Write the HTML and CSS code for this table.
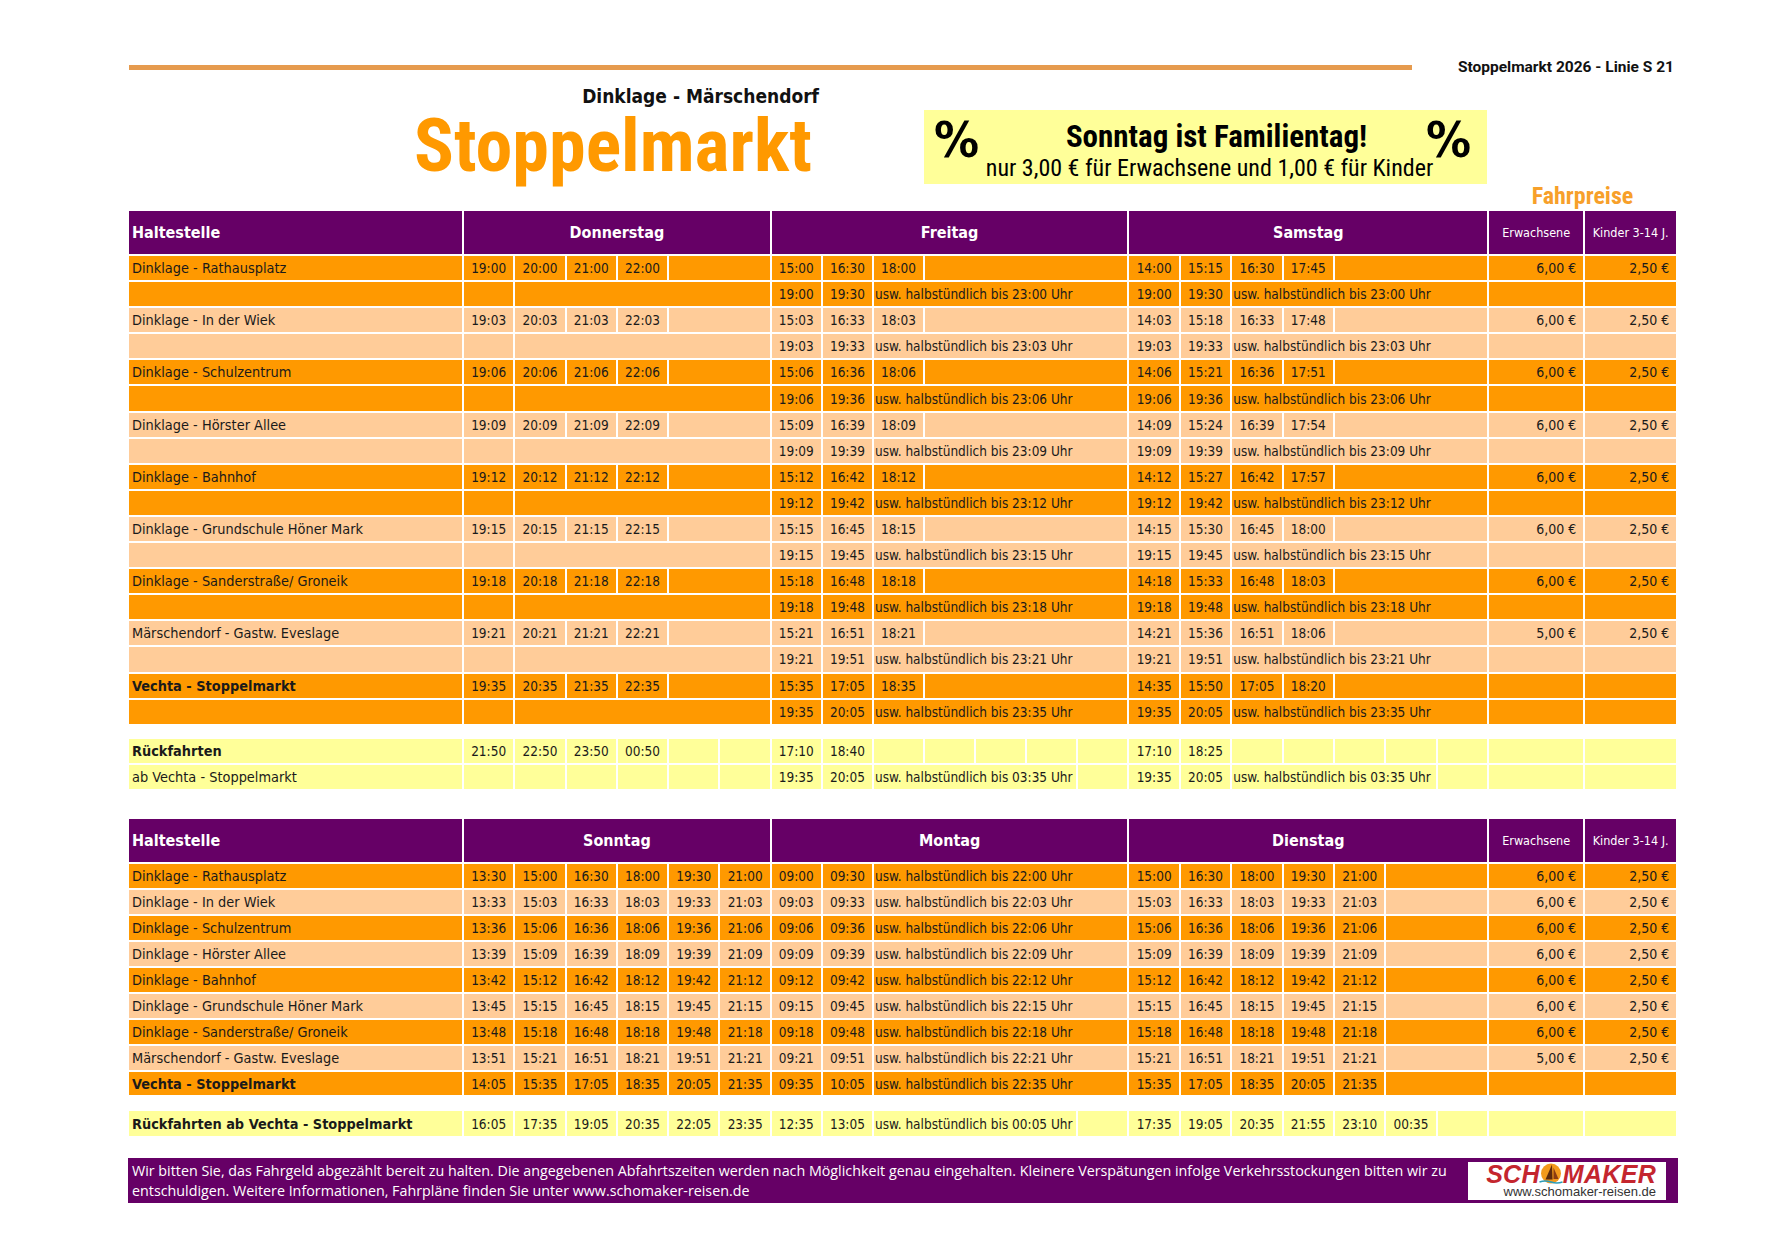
FILE: index.html
```html
<!DOCTYPE html>
<html lang="de">
<head>
<meta charset="utf-8">
<title>Stoppelmarkt 2026 - Linie S 21</title>
<link rel="stylesheet" href="styles.css">
</head>
<body>
<div class="sheet">
  <div class="topbar">
    <div class="rule"></div>
    <div class="doc-label">Stoppelmarkt 2026 - Linie S 21</div>
  </div>

  <div class="head">
    <div class="titles">
      <div class="subtitle">Dinklage - Märschendorf</div>
      <div class="title">Stoppelmarkt</div>
    </div>
    <div class="promo">
      <div class="pct">%</div>
      <div class="promo-text">
        <div class="promo-main">Sonntag ist Familientag!</div>
        <div class="promo-sub">nur 3,00 € für Erwachsene und 1,00 € für Kinder</div>
      </div>
      <div class="pct pct-right">%</div>
    </div>
  </div>

  <div class="fp-row"><div class="fp">Fahrpreise</div></div>

  <!-- Table 1 -->
  <div class="tt tt1">
    <div class="r h">
      <div class="c hl">Haltestelle</div>
      <div class="c hd s6">Donnerstag</div>
      <div class="c hd s7">Freitag</div>
      <div class="c hd s7">Samstag</div>
      <div class="c hs">Erwachsene</div>
      <div class="c hs">Kinder 3-14 J.</div>
    </div>

    <div class="r o">
      <div class="c st">Dinklage - Rathausplatz</div>
      <div class="c t">19:00</div><div class="c t">20:00</div><div class="c t">21:00</div><div class="c t">22:00</div><div class="c s2"></div>
      <div class="c t">15:00</div><div class="c t">16:30</div><div class="c t">18:00</div><div class="c s4"></div>
      <div class="c t">14:00</div><div class="c t">15:15</div><div class="c t">16:30</div><div class="c t">17:45</div><div class="c s3"></div>
      <div class="c p">6,00 €</div><div class="c p">2,50 €</div>
    </div>
    <div class="r o">
      <div class="c"></div>
      <div class="c"></div><div class="c s5"></div>
      <div class="c t">19:00</div><div class="c t">19:30</div><div class="c u s5">usw. halbstündlich bis 23:00 Uhr</div>
      <div class="c t">19:00</div><div class="c t">19:30</div><div class="c u s5">usw. halbstündlich bis 23:00 Uhr</div>
      <div class="c"></div><div class="c"></div>
    </div>

    <div class="r l">
      <div class="c st">Dinklage - In der Wiek</div>
      <div class="c t">19:03</div><div class="c t">20:03</div><div class="c t">21:03</div><div class="c t">22:03</div><div class="c s2"></div>
      <div class="c t">15:03</div><div class="c t">16:33</div><div class="c t">18:03</div><div class="c s4"></div>
      <div class="c t">14:03</div><div class="c t">15:18</div><div class="c t">16:33</div><div class="c t">17:48</div><div class="c s3"></div>
      <div class="c p">6,00 €</div><div class="c p">2,50 €</div>
    </div>
    <div class="r l">
      <div class="c"></div>
      <div class="c"></div><div class="c s5"></div>
      <div class="c t">19:03</div><div class="c t">19:33</div><div class="c u s5">usw. halbstündlich bis 23:03 Uhr</div>
      <div class="c t">19:03</div><div class="c t">19:33</div><div class="c u s5">usw. halbstündlich bis 23:03 Uhr</div>
      <div class="c"></div><div class="c"></div>
    </div>

    <div class="r o">
      <div class="c st">Dinklage - Schulzentrum</div>
      <div class="c t">19:06</div><div class="c t">20:06</div><div class="c t">21:06</div><div class="c t">22:06</div><div class="c s2"></div>
      <div class="c t">15:06</div><div class="c t">16:36</div><div class="c t">18:06</div><div class="c s4"></div>
      <div class="c t">14:06</div><div class="c t">15:21</div><div class="c t">16:36</div><div class="c t">17:51</div><div class="c s3"></div>
      <div class="c p">6,00 €</div><div class="c p">2,50 €</div>
    </div>
    <div class="r o">
      <div class="c"></div>
      <div class="c"></div><div class="c s5"></div>
      <div class="c t">19:06</div><div class="c t">19:36</div><div class="c u s5">usw. halbstündlich bis 23:06 Uhr</div>
      <div class="c t">19:06</div><div class="c t">19:36</div><div class="c u s5">usw. halbstündlich bis 23:06 Uhr</div>
      <div class="c"></div><div class="c"></div>
    </div>

    <div class="r l">
      <div class="c st">Dinklage - Hörster Allee</div>
      <div class="c t">19:09</div><div class="c t">20:09</div><div class="c t">21:09</div><div class="c t">22:09</div><div class="c s2"></div>
      <div class="c t">15:09</div><div class="c t">16:39</div><div class="c t">18:09</div><div class="c s4"></div>
      <div class="c t">14:09</div><div class="c t">15:24</div><div class="c t">16:39</div><div class="c t">17:54</div><div class="c s3"></div>
      <div class="c p">6,00 €</div><div class="c p">2,50 €</div>
    </div>
    <div class="r l">
      <div class="c"></div>
      <div class="c"></div><div class="c s5"></div>
      <div class="c t">19:09</div><div class="c t">19:39</div><div class="c u s5">usw. halbstündlich bis 23:09 Uhr</div>
      <div class="c t">19:09</div><div class="c t">19:39</div><div class="c u s5">usw. halbstündlich bis 23:09 Uhr</div>
      <div class="c"></div><div class="c"></div>
    </div>

    <div class="r o">
      <div class="c st">Dinklage - Bahnhof</div>
      <div class="c t">19:12</div><div class="c t">20:12</div><div class="c t">21:12</div><div class="c t">22:12</div><div class="c s2"></div>
      <div class="c t">15:12</div><div class="c t">16:42</div><div class="c t">18:12</div><div class="c s4"></div>
      <div class="c t">14:12</div><div class="c t">15:27</div><div class="c t">16:42</div><div class="c t">17:57</div><div class="c s3"></div>
      <div class="c p">6,00 €</div><div class="c p">2,50 €</div>
    </div>
    <div class="r o">
      <div class="c"></div>
      <div class="c"></div><div class="c s5"></div>
      <div class="c t">19:12</div><div class="c t">19:42</div><div class="c u s5">usw. halbstündlich bis 23:12 Uhr</div>
      <div class="c t">19:12</div><div class="c t">19:42</div><div class="c u s5">usw. halbstündlich bis 23:12 Uhr</div>
      <div class="c"></div><div class="c"></div>
    </div>

    <div class="r l">
      <div class="c st">Dinklage - Grundschule Höner Mark</div>
      <div class="c t">19:15</div><div class="c t">20:15</div><div class="c t">21:15</div><div class="c t">22:15</div><div class="c s2"></div>
      <div class="c t">15:15</div><div class="c t">16:45</div><div class="c t">18:15</div><div class="c s4"></div>
      <div class="c t">14:15</div><div class="c t">15:30</div><div class="c t">16:45</div><div class="c t">18:00</div><div class="c s3"></div>
      <div class="c p">6,00 €</div><div class="c p">2,50 €</div>
    </div>
    <div class="r l">
      <div class="c"></div>
      <div class="c"></div><div class="c s5"></div>
      <div class="c t">19:15</div><div class="c t">19:45</div><div class="c u s5">usw. halbstündlich bis 23:15 Uhr</div>
      <div class="c t">19:15</div><div class="c t">19:45</div><div class="c u s5">usw. halbstündlich bis 23:15 Uhr</div>
      <div class="c"></div><div class="c"></div>
    </div>

    <div class="r o">
      <div class="c st">Dinklage - Sanderstraße/ Groneik</div>
      <div class="c t">19:18</div><div class="c t">20:18</div><div class="c t">21:18</div><div class="c t">22:18</div><div class="c s2"></div>
      <div class="c t">15:18</div><div class="c t">16:48</div><div class="c t">18:18</div><div class="c s4"></div>
      <div class="c t">14:18</div><div class="c t">15:33</div><div class="c t">16:48</div><div class="c t">18:03</div><div class="c s3"></div>
      <div class="c p">6,00 €</div><div class="c p">2,50 €</div>
    </div>
    <div class="r o">
      <div class="c"></div>
      <div class="c"></div><div class="c s5"></div>
      <div class="c t">19:18</div><div class="c t">19:48</div><div class="c u s5">usw. halbstündlich bis 23:18 Uhr</div>
      <div class="c t">19:18</div><div class="c t">19:48</div><div class="c u s5">usw. halbstündlich bis 23:18 Uhr</div>
      <div class="c"></div><div class="c"></div>
    </div>

    <div class="r l">
      <div class="c st">Märschendorf - Gastw. Eveslage</div>
      <div class="c t">19:21</div><div class="c t">20:21</div><div class="c t">21:21</div><div class="c t">22:21</div><div class="c s2"></div>
      <div class="c t">15:21</div><div class="c t">16:51</div><div class="c t">18:21</div><div class="c s4"></div>
      <div class="c t">14:21</div><div class="c t">15:36</div><div class="c t">16:51</div><div class="c t">18:06</div><div class="c s3"></div>
      <div class="c p">5,00 €</div><div class="c p">2,50 €</div>
    </div>
    <div class="r l">
      <div class="c"></div>
      <div class="c"></div><div class="c s5"></div>
      <div class="c t">19:21</div><div class="c t">19:51</div><div class="c u s5">usw. halbstündlich bis 23:21 Uhr</div>
      <div class="c t">19:21</div><div class="c t">19:51</div><div class="c u s5">usw. halbstündlich bis 23:21 Uhr</div>
      <div class="c"></div><div class="c"></div>
    </div>

    <div class="r o">
      <div class="c st b">Vechta - Stoppelmarkt</div>
      <div class="c t">19:35</div><div class="c t">20:35</div><div class="c t">21:35</div><div class="c t">22:35</div><div class="c s2"></div>
      <div class="c t">15:35</div><div class="c t">17:05</div><div class="c t">18:35</div><div class="c s4"></div>
      <div class="c t">14:35</div><div class="c t">15:50</div><div class="c t">17:05</div><div class="c t">18:20</div><div class="c s3"></div>
      <div class="c"></div><div class="c"></div>
    </div>
    <div class="r o">
      <div class="c"></div>
      <div class="c"></div><div class="c s5"></div>
      <div class="c t">19:35</div><div class="c t">20:05</div><div class="c u s5">usw. halbstündlich bis 23:35 Uhr</div>
      <div class="c t">19:35</div><div class="c t">20:05</div><div class="c u s5">usw. halbstündlich bis 23:35 Uhr</div>
      <div class="c"></div><div class="c"></div>
    </div>
  </div>

  <!-- Rückfahrten 1 -->
  <div class="tt ret1">
    <div class="r y">
      <div class="c st b">Rückfahrten</div>
      <div class="c t">21:50</div><div class="c t">22:50</div><div class="c t">23:50</div><div class="c t">00:50</div><div class="c"></div><div class="c"></div>
      <div class="c t">17:10</div><div class="c t">18:40</div><div class="c"></div><div class="c"></div><div class="c"></div><div class="c"></div><div class="c"></div>
      <div class="c t">17:10</div><div class="c t">18:25</div><div class="c"></div><div class="c"></div><div class="c"></div><div class="c"></div><div class="c"></div>
      <div class="c"></div><div class="c"></div>
    </div>
    <div class="r y">
      <div class="c st">ab Vechta - Stoppelmarkt</div>
      <div class="c"></div><div class="c"></div><div class="c"></div><div class="c"></div><div class="c"></div><div class="c"></div>
      <div class="c t">19:35</div><div class="c t">20:05</div><div class="c u s4">usw. halbstündlich bis 03:35 Uhr</div><div class="c"></div>
      <div class="c t">19:35</div><div class="c t">20:05</div><div class="c u s4">usw. halbstündlich bis 03:35 Uhr</div><div class="c"></div>
      <div class="c"></div><div class="c"></div>
    </div>
  </div>

  <!-- Table 2 -->
  <div class="tt tt2">
    <div class="r h">
      <div class="c hl">Haltestelle</div>
      <div class="c hd s6">Sonntag</div>
      <div class="c hd s7">Montag</div>
      <div class="c hd s7">Dienstag</div>
      <div class="c hs">Erwachsene</div>
      <div class="c hs">Kinder 3-14 J.</div>
    </div>

    <div class="r o">
      <div class="c st">Dinklage - Rathausplatz</div>
      <div class="c t">13:30</div><div class="c t">15:00</div><div class="c t">16:30</div><div class="c t">18:00</div><div class="c t">19:30</div><div class="c t">21:00</div>
      <div class="c t">09:00</div><div class="c t">09:30</div><div class="c u s5">usw. halbstündlich bis 22:00 Uhr</div>
      <div class="c t">15:00</div><div class="c t">16:30</div><div class="c t">18:00</div><div class="c t">19:30</div><div class="c t">21:00</div><div class="c s2"></div>
      <div class="c p">6,00 €</div><div class="c p">2,50 €</div>
    </div>
    <div class="r l">
      <div class="c st">Dinklage - In der Wiek</div>
      <div class="c t">13:33</div><div class="c t">15:03</div><div class="c t">16:33</div><div class="c t">18:03</div><div class="c t">19:33</div><div class="c t">21:03</div>
      <div class="c t">09:03</div><div class="c t">09:33</div><div class="c u s5">usw. halbstündlich bis 22:03 Uhr</div>
      <div class="c t">15:03</div><div class="c t">16:33</div><div class="c t">18:03</div><div class="c t">19:33</div><div class="c t">21:03</div><div class="c s2"></div>
      <div class="c p">6,00 €</div><div class="c p">2,50 €</div>
    </div>
    <div class="r o">
      <div class="c st">Dinklage - Schulzentrum</div>
      <div class="c t">13:36</div><div class="c t">15:06</div><div class="c t">16:36</div><div class="c t">18:06</div><div class="c t">19:36</div><div class="c t">21:06</div>
      <div class="c t">09:06</div><div class="c t">09:36</div><div class="c u s5">usw. halbstündlich bis 22:06 Uhr</div>
      <div class="c t">15:06</div><div class="c t">16:36</div><div class="c t">18:06</div><div class="c t">19:36</div><div class="c t">21:06</div><div class="c s2"></div>
      <div class="c p">6,00 €</div><div class="c p">2,50 €</div>
    </div>
    <div class="r l">
      <div class="c st">Dinklage - Hörster Allee</div>
      <div class="c t">13:39</div><div class="c t">15:09</div><div class="c t">16:39</div><div class="c t">18:09</div><div class="c t">19:39</div><div class="c t">21:09</div>
      <div class="c t">09:09</div><div class="c t">09:39</div><div class="c u s5">usw. halbstündlich bis 22:09 Uhr</div>
      <div class="c t">15:09</div><div class="c t">16:39</div><div class="c t">18:09</div><div class="c t">19:39</div><div class="c t">21:09</div><div class="c s2"></div>
      <div class="c p">6,00 €</div><div class="c p">2,50 €</div>
    </div>
    <div class="r o">
      <div class="c st">Dinklage - Bahnhof</div>
      <div class="c t">13:42</div><div class="c t">15:12</div><div class="c t">16:42</div><div class="c t">18:12</div><div class="c t">19:42</div><div class="c t">21:12</div>
      <div class="c t">09:12</div><div class="c t">09:42</div><div class="c u s5">usw. halbstündlich bis 22:12 Uhr</div>
      <div class="c t">15:12</div><div class="c t">16:42</div><div class="c t">18:12</div><div class="c t">19:42</div><div class="c t">21:12</div><div class="c s2"></div>
      <div class="c p">6,00 €</div><div class="c p">2,50 €</div>
    </div>
    <div class="r l">
      <div class="c st">Dinklage - Grundschule Höner Mark</div>
      <div class="c t">13:45</div><div class="c t">15:15</div><div class="c t">16:45</div><div class="c t">18:15</div><div class="c t">19:45</div><div class="c t">21:15</div>
      <div class="c t">09:15</div><div class="c t">09:45</div><div class="c u s5">usw. halbstündlich bis 22:15 Uhr</div>
      <div class="c t">15:15</div><div class="c t">16:45</div><div class="c t">18:15</div><div class="c t">19:45</div><div class="c t">21:15</div><div class="c s2"></div>
      <div class="c p">6,00 €</div><div class="c p">2,50 €</div>
    </div>
    <div class="r o">
      <div class="c st">Dinklage - Sanderstraße/ Groneik</div>
      <div class="c t">13:48</div><div class="c t">15:18</div><div class="c t">16:48</div><div class="c t">18:18</div><div class="c t">19:48</div><div class="c t">21:18</div>
      <div class="c t">09:18</div><div class="c t">09:48</div><div class="c u s5">usw. halbstündlich bis 22:18 Uhr</div>
      <div class="c t">15:18</div><div class="c t">16:48</div><div class="c t">18:18</div><div class="c t">19:48</div><div class="c t">21:18</div><div class="c s2"></div>
      <div class="c p">6,00 €</div><div class="c p">2,50 €</div>
    </div>
    <div class="r l">
      <div class="c st">Märschendorf - Gastw. Eveslage</div>
      <div class="c t">13:51</div><div class="c t">15:21</div><div class="c t">16:51</div><div class="c t">18:21</div><div class="c t">19:51</div><div class="c t">21:21</div>
      <div class="c t">09:21</div><div class="c t">09:51</div><div class="c u s5">usw. halbstündlich bis 22:21 Uhr</div>
      <div class="c t">15:21</div><div class="c t">16:51</div><div class="c t">18:21</div><div class="c t">19:51</div><div class="c t">21:21</div><div class="c s2"></div>
      <div class="c p">5,00 €</div><div class="c p">2,50 €</div>
    </div>
    <div class="r o">
      <div class="c st b">Vechta - Stoppelmarkt</div>
      <div class="c t">14:05</div><div class="c t">15:35</div><div class="c t">17:05</div><div class="c t">18:35</div><div class="c t">20:05</div><div class="c t">21:35</div>
      <div class="c t">09:35</div><div class="c t">10:05</div><div class="c u s5">usw. halbstündlich bis 22:35 Uhr</div>
      <div class="c t">15:35</div><div class="c t">17:05</div><div class="c t">18:35</div><div class="c t">20:05</div><div class="c t">21:35</div><div class="c s2"></div>
      <div class="c"></div><div class="c"></div>
    </div>
  </div>

  <!-- Rückfahrten 2 -->
  <div class="tt ret2">
    <div class="r y">
      <div class="c st b">Rückfahrten ab Vechta - Stoppelmarkt</div>
      <div class="c t">16:05</div><div class="c t">17:35</div><div class="c t">19:05</div><div class="c t">20:35</div><div class="c t">22:05</div><div class="c t">23:35</div>
      <div class="c t">12:35</div><div class="c t">13:05</div><div class="c u s4">usw. halbstündlich bis 00:05 Uhr</div><div class="c"></div>
      <div class="c t">17:35</div><div class="c t">19:05</div><div class="c t">20:35</div><div class="c t">21:55</div><div class="c t">23:10</div><div class="c t">00:35</div><div class="c"></div>
      <div class="c"></div><div class="c"></div>
    </div>
  </div>

  <div class="footer">
    <div class="footer-text">Wir bitten Sie, das Fahrgeld abgezählt bereit zu halten. Die angegebenen Abfahrtszeiten werden nach Möglichkeit genau eingehalten. Kleinere Verspätungen infolge Verkehrsstockungen bitten wir zu<br>entschuldigen. Weitere Informationen, Fahrpläne finden Sie unter www.schomaker-reisen.de</div>
    <div class="logo">
      <div class="logo-word"><span>SCH</span><svg class="logo-o" width="24" height="22" viewBox="0 0 24 22" aria-hidden="true"><circle cx="12" cy="10.5" r="10" fill="#f29a1d"/><path d="M6.5 16.5 L13 1.5 L13.5 16.5 Z" fill="#5b2a0e"/><path d="M14.5 4.5 L19.5 16 L14.5 16 Z" fill="#8a3c12"/><path d="M0.5 19 Q6 17 12 19 T23.5 19" stroke="#2b9cb8" stroke-width="1.6" fill="none"/></svg><span>MAKER</span></div>
      <div class="logo-url">www.schomaker-reisen.de</div>
    </div>
  </div>
</div>
</body>
</html>
```

FILE: styles.css
```css
html, body {
  margin: 0;
  padding: 0;
  background: #ffffff;
}

body {
  font-family: "DejaVu Sans Condensed", "DejaVu Sans", sans-serif;
  color: #1a1a1a;
}

.sheet {
  width: 1547px;
  margin-left: 129px;
  padding-top: 58px;
}

/* top bar */
.topbar {
  display: flex;
  align-items: center;
  height: 18px;
}

.rule {
  width: 1283px;
  height: 5px;
  background: #e69b4e;
}

.doc-label {
  margin-left: auto;
  margin-right: 2px;
  font-family: "Roboto", "DejaVu Sans Condensed", sans-serif;
  font-stretch: 90%;
  font-weight: bold;
  font-size: 15.5px;
  color: #111;
  white-space: nowrap;
}

/* heading */
.head {
  display: flex;
  height: 108px;
}

.titles {
  width: 691px;
  text-align: right;
}

.subtitle {
  margin-top: 8px;
  font-size: 19px;
  line-height: 24px;
  font-weight: bold;
  color: #111;
  padding-right: 1px;
}

.title {
  font-family: "Roboto", "DejaVu Sans Condensed", sans-serif;
  font-stretch: 75%;
  font-size: 74px;
  line-height: 76px;
  font-weight: bold;
  color: #ff9900;
  padding-right: 8px;
}

.promo {
  margin-left: 104px;
  margin-top: 34px;
  width: 563px;
  height: 74px;
  background: #ffff99;
  display: flex;
  color: #000;
}

.pct {
  flex: none;
  font-size: 50px;
  line-height: 56px;
  font-weight: bold;
  margin-top: 2px;
  padding-left: 10px;
}

.pct-right {
  padding-left: 0;
  padding-right: 16px;
}

.promo-text {
  flex: 1;
  min-width: 0;
  display: flex;
  flex-direction: column;
  align-items: center;
  padding-top: 9px;
  white-space: nowrap;
  font-family: "Roboto", "DejaVu Sans Condensed", sans-serif;
}

.promo-main {
  font-size: 31px;
  line-height: 36px;
  font-weight: bold;
  font-stretch: 75%;
  margin-left: 28px;
}

.promo-sub {
  font-size: 24px;
  line-height: 27px;
  font-stretch: 80%;
  margin-left: 14px;
}

.fp-row {
  display: flex;
  justify-content: flex-end;
  height: 27px;
}

.fp {
  width: 187px;
  text-align: center;
  font-family: "Roboto", "DejaVu Sans Condensed", sans-serif;
  font-stretch: 80%;
  font-size: 24px;
  line-height: 24px;
  font-weight: bold;
  color: #f7a02a;
}

/* timetable grids */
.tt {
  display: grid;
  grid-template-columns: 333px repeat(6, 49.3px) repeat(7, 49.1px) repeat(7, 49.4px) 94px 91px;
  column-gap: 2px;
  row-gap: 2px;
}

.tt1 {
  grid-template-rows: 43px;
  grid-auto-rows: 24.1px;
}

.ret1 {
  margin-top: 15px;
  grid-auto-rows: 24.4px;
}

.tt2 {
  margin-top: 30px;
  grid-template-rows: 43px;
  grid-auto-rows: 23.9px;
}

.ret2 {
  margin-top: 16px;
  grid-auto-rows: 25px;
}

.r {
  display: contents;
}

.c {
  display: flex;
  align-items: center;
  font-size: 13.5px;
  white-space: nowrap;
  min-width: 0;
}

.h > .c { background: #660066; color: #ffffff; font-weight: bold; }
.o > .c { background: #ff9900; }
.l > .c { background: #ffcc99; }
.y > .c { background: #ffff99; }

.hl {
  font-size: 16px;
  padding-left: 3px;
}

.h > .hd {
  justify-content: center;
  font-size: 16px;
}

.h > .hs {
  justify-content: center;
  font-size: 12.5px;
  font-weight: normal;
}

.st {
  padding-left: 3px;
  font-size: 14.4px;
}

.b {
  font-weight: bold;
}

.t {
  justify-content: center;
}

.u {
  padding-left: 1px;
}

.p {
  justify-content: flex-end;
  padding-right: 7px;
  font-size: 14px;
}

.s2 { grid-column: span 2; }
.s3 { grid-column: span 3; }
.s4 { grid-column: span 4; }
.s5 { grid-column: span 5; }
.s6 { grid-column: span 6; }
.s7 { grid-column: span 7; }

/* footer */
.footer {
  margin-top: 22px;
  margin-left: -1px;
  margin-right: -2px;
  height: 45px;
  background: #660066;
  display: flex;
  align-items: center;
  color: #ffffff;
}

.footer-text {
  flex: 1;
  min-width: 0;
  padding-left: 4px;
  font-family: "Open Sans", "DejaVu Sans Condensed", sans-serif;
  font-size: 14.3px;
  line-height: 20px;
  white-space: nowrap;
  overflow: hidden;
}

.logo {
  flex: none;
  width: 198px;
  height: 38px;
  margin-right: 12px;
  margin-left: 4px;
  background: #ffffff;
  box-sizing: border-box;
  padding: 1px 10px 0 8px;
  display: flex;
  flex-direction: column;
  align-items: flex-end;
}

.logo-word {
  display: flex;
  align-items: center;
  font-family: "Liberation Sans", Arial, sans-serif;
  font-weight: bold;
  font-style: italic;
  font-size: 25px;
  line-height: 22px;
  letter-spacing: 0.3px;
  color: #c4262e;
}

.logo-o {
  display: block;
  margin: 0 0 0 -1px;
}

.logo-url {
  font-family: "Liberation Sans", Arial, sans-serif;
  font-size: 13px;
  line-height: 14px;
  color: #333333;
}
```
